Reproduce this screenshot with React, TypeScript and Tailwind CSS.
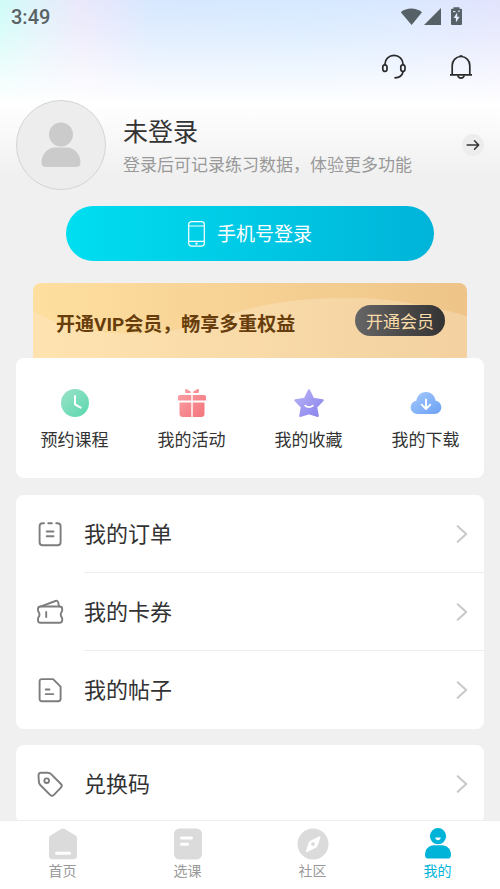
import type { ReactNode } from "react";

function HeadsetIcon() {
  return (
    <svg width="26" height="26" viewBox="0 0 26 26" fill="none" stroke="#2b2b2b" strokeWidth="1.7" strokeLinecap="round">
      <path d="M4 10.5V10a9 8.6 0 0 1 18 0v.5" />
      <rect x="1.8" y="10.8" width="4.2" height="6.600" rx="2.1" />
      <rect x="19.800" y="10.8" width="4.2" height="6.600" rx="2.1" />
      <path d="M22 18c-.8 3.6-3.5 5.6-8 5.8" />
    </svg>
  );
}

function BellIcon() {
  return (
    <svg width="26" height="26" viewBox="0 0 26 26" fill="none" stroke="#2b2b2b" strokeWidth="1.7">
      <path d="M4.200 20.8V11.500a8.800 9 0 0 1 17.600 0v9.300" />
      <path d="M2 20.8h22M11.5 2h3" />
      <path d="M9.8 21.4c.8 3.6 5.6 3.6 6.4 0" />
    </svg>
  );
}

function StatusBar() {
  return (
    <div className="flex h-[34px] items-center justify-between pr-9 pl-[11px]">
      <span className="font-[Roboto,sans-serif] text-[20px] leading-[34px] font-medium text-[#5a6266]">3:49</span>
      <svg width="64" height="20" viewBox="0 0 64 20" fill="#566067">
        <path d="M.8 5.2C6.600.2 15.800.2 22 5.200L11.600 18z" />
        <path d="M41 1v17H24z" />
        <path d="M53.500.2h6v1.600h1.200c.8 0 1.300.5 1.300 1.300v13.600c0 .8-.5 1.300-1.300 1.300h-8.400c-.8 0-1.300-.5-1.300-1.300V3.100c0-.8.500-1.300 1.300-1.300h1.200z" />
        <path d="M57.200 5.500L53.600 11h2.300v4.500l3.700-5.800h-2.400z" fill="#e3edff" />
        <path d="M53 4.600h2.500M58 4.200h2" stroke="#e3edff" />
      </svg>
    </div>
  );
}

function Profile() {
  return (
    <section className="mx-4 flex items-center">
      <div className="flex size-[90px] shrink-0 items-center justify-center rounded-full border border-[#d4d4d4] bg-[#ededed]">
        <svg width="40" height="46" viewBox="0 0 40 46" fill="#cbcbcb">
          <circle cx="20" cy="12.500" r="12" />
          <path d="M.5 40.500C.5 32 7 25.500 14 25.500h12c7 0 13.500 6.500 13.500 15 0 3-1.500 4.500-5 4.500h-29c-3.500 0-5-1.500-5-4.500z" />
        </svg>
      </div>
      <div className="ml-[17px] flex-1 pt-1">
        <h1 className="text-[25px] leading-[34px] text-[#333]">未登录</h1>
        <p className="text-[17px] leading-[34px] whitespace-nowrap text-[#999]">登录后可记录练习数据，体验更多功能</p>
      </div>
      <button type="button" aria-label="登录" className="flex size-[22px] items-center justify-center rounded-full bg-[#ededed]">
        <svg width="14" height="12" viewBox="0 0 14 12" fill="none" stroke="#333" strokeWidth="1.500" strokeLinecap="round" strokeLinejoin="round">
          <path d="M1.200 6h11.500M8.500 1.800 12.700 6l-4.200 4.200" />
        </svg>
      </button>
    </section>
  );
}

function LoginButton() {
  return (
    <button
      type="button"
      className="mx-[66px] mt-4 flex h-[55px] items-center justify-center gap-3 rounded-full bg-linear-to-r from-[#00def0] to-[#00b4d9] text-[19px] text-white"
    >
      <svg width="17" height="26" viewBox="0 0 17 26" fill="none" stroke="#fff" strokeWidth="1.200">
        <rect x=".7" y=".7" width="15.600" height="24.400" rx="2.800" />
        <path d="M.7 5h15.600M.7 20.300h15.600" />
        <circle cx="8.500" cy="22.700" r=".5" />
      </svg>
      手机号登录
    </button>
  );
}

function VipBanner() {
  return (
    <section className="relative mx-[33px] mt-[22px] overflow-hidden rounded-t-lg bg-linear-to-r from-[#fedf9f] to-[#eec488]">
      <svg className="absolute inset-0 size-full" viewBox="0 0 434 75" preserveAspectRatio="none" aria-hidden="true">
        <path d="M0 28C45 54 112 56 165 42 245 10 340 5 434 33V75H0z" fill="#fff0dc" fillOpacity=".3" />
      </svg>
      <div className="relative flex h-[75px] items-center justify-between pr-[22px] pl-[23px]">
        <h2 className="pt-2 font-[Roboto,'Noto_Sans_CJK_SC',sans-serif] text-[19px] leading-[28px] font-bold text-[#673d0c]">开通VIP会员，畅享多重权益</h2>
        <button type="button" className="h-[31px] rounded-full bg-linear-to-r from-[#666] to-[#333] px-[11px] text-[17px] leading-[31px] text-[#fbdca8]">
          开通会员
        </button>
      </div>
    </section>
  );
}

function ShortcutIcon({ name }: { name: string }) {
  const box = { width: 32, height: 32, viewBox: "0 0 32 32" };
  if (name === "course")
    return (
      <svg {...box}>
        <defs>
          <linearGradient id="course" x1="0" y1="0" x2="1" y2="1">
            <stop stopColor="#9be3c9" />
            <stop offset="1" stopColor="#59d7ad" />
          </linearGradient>
        </defs>
        <circle cx="16" cy="16" r="14" fill="url(#course)" />
        <path d="M16 9v8.300l5.600 3.300" fill="none" stroke="#fff" strokeWidth="2" strokeLinecap="round" strokeLinejoin="round" />
      </svg>
    );
  if (name === "activity")
    return (
      <svg {...box}>
        <defs>
          <linearGradient id="activity" x1="0" y1="0" x2="32" y2="32" gradientUnits="userSpaceOnUse">
            <stop stopColor="#fba6aa" />
            <stop offset="1" stopColor="#f27077" />
          </linearGradient>
        </defs>
        <g fill="url(#activity)">
          <path d="M10.800 2.300 15.300 5l-1 1H9.500L9 3.400c0-1 .9-1.600 1.800-1.100zM21.200 2.300 16.700 5l1 1h4.800l.5-2.600c0-1-.9-1.600-1.800-1.100z" />
          <path d="M4 8h11.300v5.500H3c-.7 0-1-.3-1-1V10c0-1.300.7-2 2-2zM16.700 8H28c1.300 0 2 .7 2 2v2.500c0 .7-.3 1-1 1H16.700zM3.500 15.500h11.800V30H7c-2.500 0-3.500-1-3.500-3.500zM16.700 15.500h11.800v11c0 2.500-1 3.500-3.500 3.500h-8.300z" />
        </g>
      </svg>
    );
  if (name === "favorite")
    return (
      <svg {...box}>
        <defs>
          <linearGradient id="favorite" x1="0" y1="0" x2="1" y2="1">
            <stop stopColor="#b9b4f5" />
            <stop offset="1" stopColor="#8782ed" />
          </linearGradient>
        </defs>
        <path d="M16 3.200l4.100 8.600 9.600 1.400-6.400 6.900 1.500 8.900L16 26.200 7.200 29l1.500-8.900-6.400-6.900 9.600-1.400z" fill="url(#favorite)" stroke="url(#favorite)" strokeWidth="2" strokeLinejoin="round" />
        <path d="M12.200 18.700c2 2 5.600 2 7.600 0" fill="none" stroke="#fff" strokeWidth="1.800" strokeLinecap="round" />
      </svg>
    );
  return (
    <svg {...box}>
      <defs>
        <linearGradient id="download" x1="0" y1="0" x2="1" y2="1">
          <stop stopColor="#a4c9fd" />
          <stop offset="1" stopColor="#6ca1f5" />
        </linearGradient>
      </defs>
      <path d="M7.500 27C3.500 27 .7 24 .7 20.500c0-3.600 2.300-6.200 5.600-6.800C7.300 8.400 11.300 5 16 5s8.700 3.400 9.700 8.700c3.300.6 5.600 3.200 5.600 6.800 0 3.500-2.800 6.500-6.800 6.500z" fill="url(#download)" />
      <path d="M16 12.500v9.300M11.700 17.700l4.300 4.300 4.300-4.300" fill="none" stroke="#fff" strokeWidth="1.900" strokeLinecap="round" strokeLinejoin="round" />
    </svg>
  );
}

const shortcuts = [
  { name: "course", label: "预约课程" },
  { name: "activity", label: "我的活动" },
  { name: "favorite", label: "我的收藏" },
  { name: "download", label: "我的下载" },
];

function Shortcuts() {
  return (
    <section className="mx-4 grid grid-cols-4 rounded-lg bg-white pt-[29px] pb-[26px]">
      {shortcuts.map((item) => (
        <button key={item.name} type="button" className="flex flex-col items-center gap-[7px] text-[17px] leading-[26px] whitespace-nowrap text-[#333]">
          <ShortcutIcon name={item.name} />
          {item.label}
        </button>
      ))}
    </section>
  );
}

const rowIcons: Record<string, ReactNode> = {
  order: (
    <>
      <path d="M7 2.200H5.600c-2 0-3 1-3 3v16c0 2 1 3 3 3h15c2 0 3-1 3-3v-16c0-2-1-3-3-3h-1.400M11.300 2.200h3.600" />
      <path d="M9.700 10.500h6.800M9.700 15.300h6.800" />
    </>
  ),
  coupon: (
    <>
      <path d="M3.500 7.500h19.200c1.800 0 2.500 1 2.500 2.500v1.500c0 1-1.500 1.800-1.500 4s1.500 3 1.500 4V21c0 1.700-.8 2.800-2.700 2.800h-19C1.800 23.800 1 22.700 1 21v-1.500c0-1 1.500-1.800 1.500-4S1 12.500 1 11.500V10c0-1.500.7-2.500 2.500-2.500z" />
      <path d="M4 7.300 18.500 2c1.500-.5 2.300 0 2.700 1.400l.8 3.800M9.200 13v5" />
    </>
  ),
  post: (
    <>
      <path d="M4.900 2.100h11.200l7.500 7.500v12.200c0 1.700-.7 2.400-2.300 2.400H4.900c-1.600 0-2.300-.7-2.300-2.400V4.500c0-1.600.7-2.400 2.300-2.400z" />
      <path d="M8.700 12.500h3.800M8.700 17.100h7.600" />
    </>
  ),
  code: (
    <>
      <path d="M1.500 4.500c0-2 .8-2.900 2.800-2.900l6.700.2c1.300 0 2.200.4 3.100 1.300l9.800 9.900c1.300 1.300 1.300 2.300 0 3.600l-7 7.200c-1.300 1.300-2.500 1.300-3.800 0L3.300 14c-1-1-1.300-1.800-1.400-3.100z" />
      <circle cx="9.700" cy="9.700" r="2.300" />
    </>
  ),
};

function MenuRow({ icon, label }: { icon: string; label: string }) {
  return (
    <li>
      <button type="button" className="flex h-[78px] w-full items-center pl-[21px] text-left">
        <svg width="27" height="27" viewBox="0 0 27 27" fill="none" stroke="#7d7d7d" strokeWidth="1.900" strokeLinecap="round" strokeLinejoin="round">
          {rowIcons[icon]}
        </svg>
        <span className="ml-5 flex h-full flex-1 items-center justify-between border-[#ededed] pr-4 [li:not(:last-child)_&]:border-b">
          <span className="pb-1 text-[22px] leading-[32px] text-[#333]">{label}</span>
          <svg width="12" height="18" viewBox="0 0 12 18" fill="none" stroke="#c8c8c8" strokeWidth="2" strokeLinecap="round" strokeLinejoin="round">
            <path d="M1.700 1.200 10.200 9l-8.500 7.800" />
          </svg>
        </span>
      </button>
    </li>
  );
}

function TabIcon({ name }: { name: string }) {
  const box = { width: 32, height: 32, viewBox: "0 0 32 32" };
  if (name === "home")
    return (
      <svg {...box} fill="#dbdbdb">
        <path d="M13.700 1.200c1.500-.9 3.100-.9 4.600 0L28.500 7.500c1 .6 1.500 1.500 1.500 2.700v17.300c0 2.500-1.200 3.700-3.700 3.700H5.700c-2.500 0-3.700-1.200-3.700-3.700V10.200C2 9 2.500 8.100 3.500 7.500z" />
        <rect x="8" y="23.700" width="16" height="3" rx="1.500" fill="#fff" />
      </svg>
    );
  if (name === "class")
    return (
      <svg {...box} fill="#dbdbdb">
        <rect x="2" y=".5" width="28" height="31" rx="5.500" />
        <rect x="8" y="8.500" width="13" height="3" rx="1.500" fill="#fff" />
        <rect x="8" y="14.700" width="9" height="3" rx="1.500" fill="#fff" />
      </svg>
    );
  if (name === "community")
    return (
      <svg {...box} fill="#dbdbdb">
        <circle cx="16" cy="16" r="15.500" />
        <path d="M9 22.800l2.700-8.200c.3-.9.800-1.400 1.700-1.900L22 8.500c1-.4 1.600.1 1.300 1.200L20.500 18c-.3.900-.8 1.400-1.700 1.800L10.200 24c-1 .4-1.500-.1-1.200-1.200z" fill="#fff" />
        <circle cx="16" cy="16" r="1.900" />
      </svg>
    );
  return (
    <svg {...box} fill="#00b4d9">
      <circle cx="16" cy="8.200" r="8.100" />
      <path d="M3 26.900C3 21.100 7 17.300 12 17.300h8c5 0 9 3.800 9 9.600 0 2.400-1.200 3.600-3.700 3.600H6.700C4.200 30.500 3 29.300 3 26.900z" />
      <path d="M13.300 9.500h5.400c0 3.700-5.400 3.700-5.400 0z" fill="#fff" />
    </svg>
  );
}

const tabs = [
  { name: "home", label: "首页" },
  { name: "class", label: "选课" },
  { name: "community", label: "社区" },
  { name: "mine", label: "我的" },
];

export default function App() {
  return (
    <div className="flex h-screen flex-col overflow-hidden bg-[#f0f0f0] font-['Noto_Sans_CJK_SC',sans-serif]">
      <main className="min-h-0 flex-1 overflow-hidden">
        <div className="bg-[linear-gradient(to_bottom,transparent_0,#ffffff40_34px,#fff_105px,#f0f0f0_175px),linear-gradient(to_right,#cffcf7_0%,#def3fa_7%,#eae8fb_16%,#e2e7fd_23%,#d7e8fe_30%,#d5e9ff_60%,#dae8ff_82%,#e2e4fd_100%)]">
          <StatusBar />
          <div className="flex h-[66px] items-center justify-end gap-[41px] pr-[26px]">
            <button type="button" aria-label="客服">
              <HeadsetIcon />
            </button>
            <button type="button" aria-label="消息">
              <BellIcon />
            </button>
          </div>
          <Profile />
        </div>
        <div className="grid">
          <LoginButton />
        </div>
        <VipBanner />
        <Shortcuts />
        <ul className="mx-4 mt-[17px] rounded-lg bg-white">
          <MenuRow icon="order" label="我的订单" />
          <MenuRow icon="coupon" label="我的卡券" />
          <MenuRow icon="post" label="我的帖子" />
        </ul>
        <ul className="mx-4 mt-4 rounded-lg bg-white">
          <MenuRow icon="code" label="兑换码" />
        </ul>
      </main>
      <nav className="grid shrink-0 grid-cols-4 border-t border-[#ededed] bg-white pt-[7px] pb-2">
        {tabs.map((tab) => (
          <a
            key={tab.name}
            href={`#${tab.name}`}
            aria-current={tab.name === "mine" ? "page" : undefined}
            className="flex flex-col items-center text-[14px] leading-[21px] text-[#999] aria-[current=page]:text-[#00b4d9]"
          >
            <TabIcon name={tab.name} />
            {tab.label}
          </a>
        ))}
      </nav>
    </div>
  );
}
